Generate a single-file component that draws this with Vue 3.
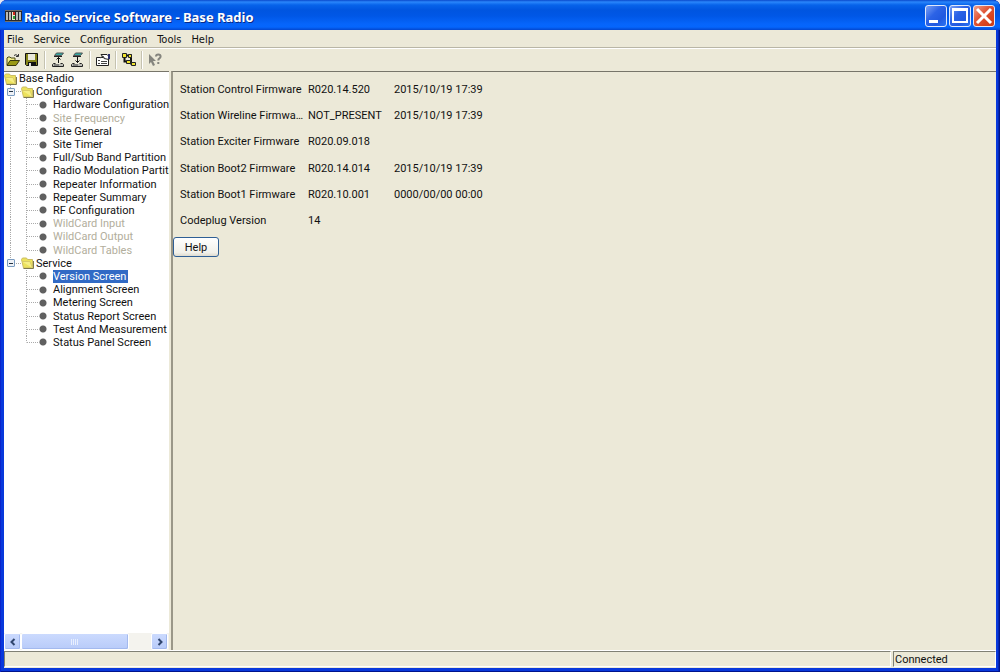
<script setup>
import { ref } from 'vue'

const menus = ['File', 'Service', 'Configuration', 'Tools', 'Help']

const selected = ref('Version Screen')

const nodes = [
  { label: 'Base Radio', level: 0 },
  { label: 'Configuration', level: 1 },
  { label: 'Hardware Configuration', level: 2 },
  { label: 'Site Frequency', level: 2, off: true },
  { label: 'Site General', level: 2 },
  { label: 'Site Timer', level: 2 },
  { label: 'Full/Sub Band Partition', level: 2 },
  { label: 'Radio Modulation Partition', level: 2 },
  { label: 'Repeater Information', level: 2 },
  { label: 'Repeater Summary', level: 2 },
  { label: 'RF Configuration', level: 2 },
  { label: 'WildCard Input', level: 2, off: true },
  { label: 'WildCard Output', level: 2, off: true },
  { label: 'WildCard Tables', level: 2, off: true, last: true },
  { label: 'Service', level: 1, last: true },
  { label: 'Version Screen', level: 2, tail: true },
  { label: 'Alignment Screen', level: 2, tail: true },
  { label: 'Metering Screen', level: 2, tail: true },
  { label: 'Status Report Screen', level: 2, tail: true },
  { label: 'Test And Measurement Screen', level: 2, tail: true },
  { label: 'Status Panel Screen', level: 2, tail: true, last: true },
]

const versions = [
  ['Station Control Firmware', 'R020.14.520', '2015/10/19 17:39'],
  ['Station Wireline Firmware', 'NOT_PRESENT', '2015/10/19 17:39'],
  ['Station Exciter Firmware', 'R020.09.018', ''],
  ['Station Boot2 Firmware', 'R020.14.014', '2015/10/19 17:39'],
  ['Station Boot1 Firmware', 'R020.10.001', '0000/00/00 00:00'],
  ['Codeplug Version', '14', ''],
]
</script>

<template>
  <div class="window">
    <header class="titlebar">
      <svg class="app-icon" width="17" height="12" viewBox="0 0 17 12">
        <rect width="17" height="12" fill="#2a2a2c" />
        <path d="M0 .5h17M0 11.500h17" stroke="#6f6f6f" />
        <path d="M1 2h2v8h-2zM4 2h2v8h-2zM11 2h2v8h-2zM14 2h2v8h-2z" fill="#b9b9b2" />
        <path d="M7 2h3v8h-3z" fill="#efe9c8" />
        <path d="M8 2h2v3h-2z" fill="#d02a1c" />
        <path d="M8 6h2v3h-2z" fill="#2f9b35" />
      </svg>
      <h1>Radio Service Software - Base Radio</h1>
      <div class="caption-buttons">
        <button class="cap" aria-label="Minimize">
          <svg width="20" height="20" viewBox="0 0 20 20"><path d="M3 14h9v3h-9z" fill="#fff" /></svg>
        </button>
        <button class="cap" aria-label="Maximize">
          <svg width="20" height="20" viewBox="0 0 20 20"><path d="M2 2h16v15h-16zM4 5v10h12v-10z" fill="#fff" fill-rule="evenodd" /></svg>
        </button>
        <button class="cap close" aria-label="Close">
          <svg width="20" height="20" viewBox="0 0 20 20"><path d="M3 3l14 14M17 3l-14 14" stroke="#fff" stroke-width="3" /></svg>
        </button>
      </div>
    </header>

    <div class="client">
      <nav class="menubar">
        <button v-for="m in menus" :key="m">{{ m }}</button>
      </nav>

      <div class="toolbar" role="toolbar" aria-label="Tools">
        <button aria-label="Open">
          <svg width="14" height="14" viewBox="0 0 14 14">
            <path d="M1 12V5l1-1h2l1 1h4v3" fill="#f4ef8a" stroke="#4b4a14" />
            <path d="M1 12.500l3-5h9.500l-3.500 5z" fill="#9a9914" stroke="#3a390c" />
            <path d="M8 2.500q2-2 4 .5M12.500 1v2.500h-2.500" fill="none" stroke="#333" />
          </svg>
        </button>
        <button aria-label="Save">
          <svg width="14" height="14" viewBox="0 0 14 14">
            <path d="M.5 .5h12v12h-11l-1-1z" fill="#85841a" stroke="#111" />
            <path d="M3 1h7v6h-7z" fill="#e9e8dc" />
            <path d="M3 9h8v4h-8z" fill="#111" />
            <path d="M4 10h2v3h-2z" fill="#ddd" />
          </svg>
        </button>
        <span class="sep"></span>
        <button aria-label="Read device">
          <svg width="14" height="16" viewBox="0 0 14 16">
            <path d="M3.500 3.500l2-2.500h7l-2 2.500z" fill="#35aaa4" stroke="#555" />
            <path d="M3 4.500h8" stroke="#222" />
            <path d="M7.500 5v6M5.500 7.500l2-2 2 2" fill="none" stroke="#111" />
            <path d="M2.500 11.500h2M9.500 11.500h2l1 1v2h-11v-2l1-1" fill="none" stroke="#222" />
            <path d="M2 12h10v2h-10z" fill="#bdbdb6" />
            <path d="M3 13h5" stroke="#444" />
          </svg>
        </button>
        <button aria-label="Write device">
          <svg width="14" height="16" viewBox="0 0 14 16">
            <path d="M3.500 3.500l2-2.500h7l-2 2.500z" fill="#35aaa4" stroke="#555" />
            <path d="M3 4.500h8" stroke="#222" />
            <path d="M7.500 5v6M5.500 8.500l2 2 2-2" fill="none" stroke="#111" />
            <path d="M2.500 11.500h2M9.500 11.500h2l1 1v2h-11v-2l1-1" fill="none" stroke="#222" />
            <path d="M2 12h10v2h-10z" fill="#bdbdb6" />
            <path d="M3 13h5" stroke="#444" />
          </svg>
        </button>
        <span class="sep"></span>
        <button aria-label="Properties">
          <svg width="14" height="14" viewBox="0 0 14 14">
            <path d="M.5 4.500h12v8h-12z" fill="#fff" stroke="#222" />
            <path d="M5 1.500h6l2 2v3l-5-1z" fill="#fff" stroke="#222" />
            <path d="M12 1h2v5h-2z" fill="#2b2f6e" />
            <path d="M2 7.500h2M2 10.500h2M5 8.500h6M5 10.500h6" stroke="#444" />
            <path d="M4 5l3-2 2 3" fill="none" stroke="#444" />
          </svg>
        </button>
        <span class="sep"></span>
        <button aria-label="Connection">
          <svg width="14" height="14" viewBox="0 0 14 14">
            <path d="M2.500 4v4.500h3M4 2.500h5v8h2" fill="none" stroke="#111" stroke-width="2" />
            <path d="M.5 .5h4v4h-4zM6.500 1.500h3v3h-3zM4.500 7.500h4v3h-4zM9.500 9.500h4v3h-4z" fill="#f2e52c" stroke="#222" />
          </svg>
        </button>
        <span class="sep"></span>
        <button aria-label="Context help" disabled>
          <svg width="14" height="14" viewBox="0 0 14 14">
            <path d="M1 1v10l2-2 2 4 2-1-2-4h3z" fill="#85857e" />
            <path d="M8 3.500q0-2 2.300-2t2.300 2q0 1-1.200 1.800t-1.100 2.200M10.300 9v2" fill="none" stroke="#85857e" stroke-width="2" />
          </svg>
        </button>
      </div>

      <div class="body">
        <aside class="side">
          <ul class="tree" role="tree" aria-label="Screens">
            <li
              v-for="n in nodes"
              :key="n.label"
              role="treeitem"
              :aria-level="n.level + 1"
              :class="['node', 'l' + n.level, { last: n.last, tail: n.tail }]"
            >
              <span v-if="n.level > 0" class="trunk">
                <button v-if="n.level === 1" class="toggle" :aria-label="'Collapse ' + n.label"></button>
              </span>
              <span v-if="n.level === 2" class="branch"></span>
              <svg v-if="n.level < 2" class="folder" width="13" height="12" viewBox="0 0 13 12">
                <path d="M.5 2.500l1-1.500h4l1 1.500h5v8.500h-9z" fill="#ece25c" stroke="#cbbd62" />
                <path d="M1 4.500h8l2.500 6.500" fill="#f6ef86" stroke="#d8cb68" />
                <path d="M12.500 4v7.500h-10" fill="none" stroke="#7d784e" />
              </svg>
              <button
                class="label"
                :class="{ on: selected === n.label }"
                :disabled="n.off"
                @click="selected = n.label"
              >{{ n.label }}</button>
            </li>
          </ul>
          <div class="scrollbar">
            <button aria-label="Scroll left">
              <svg width="8" height="8" viewBox="0 0 8 8"><path d="M5.500 1l-3 3 3 3" fill="none" stroke="#30466e" stroke-width="2" /></svg>
            </button>
            <div class="track"><div class="thumb"><i></i><i></i><i></i><i></i></div></div>
            <button aria-label="Scroll right">
              <svg width="8" height="8" viewBox="0 0 8 8"><path d="M2.500 1l3 3-3 3" fill="none" stroke="#30466e" stroke-width="2" /></svg>
            </button>
          </div>
        </aside>

        <main class="content">
          <table>
            <tbody>
              <tr v-for="v in versions" :key="v[0]">
                <th scope="row">{{ v[0] }}</th>
                <td>{{ v[1] }}</td>
                <td>{{ v[2] }}</td>
              </tr>
            </tbody>
          </table>
          <button class="help">Help</button>
        </main>
      </div>

      <footer class="status">
        <span class="cell grow"></span>
        <span class="cell state">Connected</span>
      </footer>
    </div>
  </div>
</template>

<style>
body {
  background: #e4e8f2;
}
</style>

<style scoped>
* {
  box-sizing: border-box;
}

.window {
  display: flex;
  flex-direction: column;
  height: 100vh;
  overflow: hidden;
  padding: 0 4px 4px;
  border-radius: 7px 7px 0 0;
  background: #0838dc;
  box-shadow: inset 1px 0 #0a24cc, inset -1px 0 #00138c, inset 0 -1px #00138c, inset -2px 0 #0428b4;
  font-family: "Roboto", "Liberation Sans", sans-serif;
  font-size: 11px;
  color: #111;
}

button {
  margin: 0;
  padding: 0;
  border: 0;
  background: none;
  font: inherit;
  color: inherit;
}

svg {
  display: block;
}

.titlebar {
  display: flex;
  align-items: center;
  flex: none;
  height: 30px;
  margin: 0 -4px;
  padding: 2px 5px 0 5px;
  background: linear-gradient(#0a49cc 0, #2a86fb 2px, #0763ea 5px, #0055e0 10px, #0057e6 16px, #0665fb 24px, #0566fd 27px, #0347cf 30px);
}

h1 {
  flex: 1;
  margin: 0 0 0 2px;
  padding-top: 1px;
  font: 700 13px/18px "Noto Sans", "Open Sans", sans-serif;
  color: #fff;
  text-shadow: 1px 1px #0a2a86;
}

.caption-buttons {
  display: flex;
  gap: 2px;
}

.cap {
  width: 22px;
  height: 22px;
  border: 1px solid #dfe8fb;
  border-radius: 3px;
  background: linear-gradient(135deg, #7ba1f4, #2c63e6 40%, #2159e0 70%, #2a74f4);
}

.cap.close {
  background: linear-gradient(135deg, #f0a088, #e0583a 40%, #d8441e 70%, #c83c18);
}

.client {
  display: flex;
  flex-direction: column;
  flex: 1;
  min-height: 0;
  background: #ece9d8;
}

.menubar {
  display: flex;
  flex: none;
  gap: 10px;
  height: 18px;
  padding: 1px 3px 0;
  border-bottom: 1px solid #b9b6a6;
  font-family: "DejaVu Sans Condensed", "DejaVu Sans", sans-serif;
}

.toolbar {
  display: flex;
  align-items: center;
  flex: none;
  gap: 5px;
  height: 23px;
  padding: 0 2px;
  border-top: 1px solid #fff;
}

.sep {
  width: 2px;
  height: 18px;
  border-left: 1px solid #c5c2b0;
  border-right: 1px solid #fff;
}

.body {
  display: flex;
  flex: 1;
  min-height: 0;
}

.side {
  display: flex;
  flex-direction: column;
  flex: none;
  width: 165px;
  border-top: 1px solid #77756a;
  background: #fff;
}

.tree {
  display: grid;
  grid-auto-rows: 1fr;
  height: 277px;
  margin: 0 0 auto;
  padding: 0;
  overflow: hidden;
  list-style: none;
}

.node {
  display: flex;
  align-items: center;
  min-height: 0;
  white-space: nowrap;
}

.trunk {
  display: flex;
  align-items: center;
  flex: none;
  align-self: stretch;
  width: 17px;
  background: repeating-linear-gradient(#aaa 0 1px, #fff 1px 2px) 6px 0 / 1px 100% no-repeat;
}

.l1 .trunk {
  background: repeating-linear-gradient(#aaa 0 1px, #fff 1px 2px) 6px 0 / 1px 100% no-repeat,
    repeating-linear-gradient(90deg, #aaa 0 1px, #fff 1px 2px) 12px 50% / 5px 1px no-repeat;
}

.l1.last .trunk {
  background-size: 1px 50%, 5px 1px;
}

.tail .trunk {
  background: none;
}

.toggle {
  width: 8px;
  height: 8px;
  margin-left: 3px;
  border: 1px solid #7b9cc0;
  border-radius: 1px;
  background: linear-gradient(#234, #234) center / 4px 1px no-repeat #eef1f6;
}

.branch {
  flex: none;
  align-self: stretch;
  width: 32px;
  background: repeating-linear-gradient(#aaa 0 1px, #fff 1px 2px) 5px 0 / 1px 100% no-repeat,
    repeating-linear-gradient(90deg, #aaa 0 1px, #fff 1px 2px) 6px 50% / 13px 1px no-repeat,
    radial-gradient(circle, #606060 3px, transparent 4px) 18px 50% / 8px 8px no-repeat;
}

.last .branch {
  background-size: 1px 50%, 13px 1px, 8px 8px;
}

.folder {
  flex: none;
  margin: 0 2px 0 0;
}

.label {
  flex: none;
  height: 13px;
  line-height: 13px;
}

.label:disabled {
  color: #b2ae9c;
}

.label.on {
  padding-right: 2px;
  background: #316ac5;
  color: #fff;
}

.scrollbar {
  display: flex;
  flex: none;
  height: 17px;
  padding-right: 1px;
  background: #f4f3ee;
}

.scrollbar button,
.thumb {
  display: flex;
  align-items: center;
  justify-content: center;
  border: 1px solid #fff;
  border-radius: 2px;
  background: linear-gradient(#cbdafe, #b8cbf9);
  box-shadow: inset -1px -1px #a3b9ee;
}

.scrollbar button {
  flex: none;
  width: 17px;
}

.track {
  display: flex;
  flex: 1;
}

.thumb {
  gap: 1px;
  width: 83%;
}

.thumb i {
  width: 1px;
  height: 6px;
  background: #e8effe;
}

.content {
  flex: 1;
  min-width: 0;
  margin-left: 2px;
  padding: 4px 0;
  border-top: 1px solid #77756a;
  border-left: 2px solid #9a9788;
}

table {
  table-layout: fixed;
  width: 330px;
  height: 158px;
  border-collapse: collapse;
}

th,
td {
  padding: 0;
  overflow: hidden;
  text-align: left;
  text-overflow: ellipsis;
  font-weight: 400;
  white-space: nowrap;
}

th {
  width: 132px;
  padding-left: 7px;
}

td {
  padding-left: 3px;
}

td:nth-child(2) {
  width: 86px;
}

.help {
  display: block;
  width: 46px;
  height: 20px;
  margin-top: 3px;
  border: 1px solid #2f5f95;
  border-radius: 3px;
  background: linear-gradient(#fff, #f2f1ea 80%, #dedbcf);
}

.status {
  display: flex;
  flex: none;
  gap: 2px;
  height: 18px;
  padding-bottom: 1px;
  border-top: 1px solid #fff;
}

.cell {
  border: 1px solid;
  border-color: #808075 #fff #fff #808075;
  line-height: 16px;
}

.grow {
  flex: 1;
}

.state {
  width: 103px;
  padding-left: 1px;
}
</style>
